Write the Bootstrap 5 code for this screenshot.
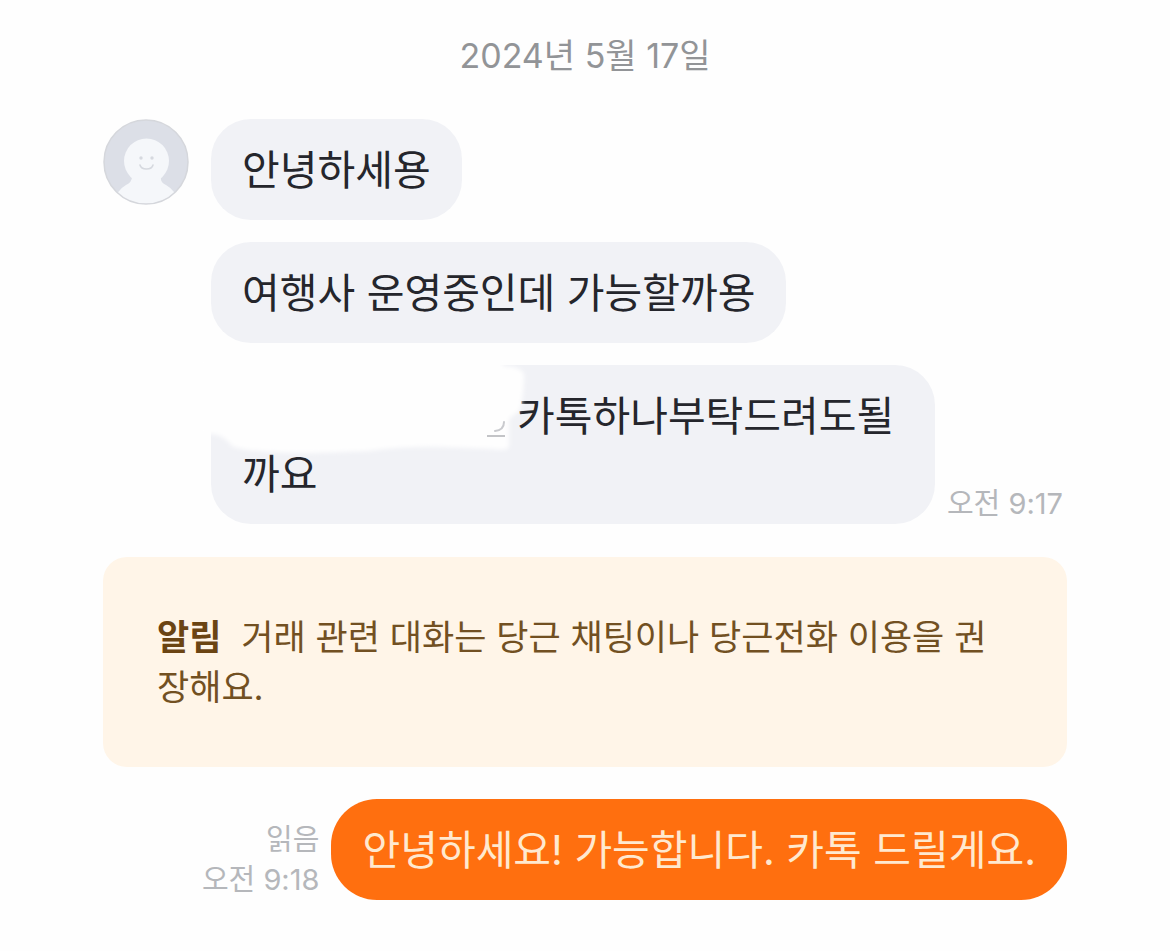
<!DOCTYPE html>
<html lang="ko">
<head>
<meta charset="utf-8">
<meta name="viewport" content="width=device-width, initial-scale=1">
<title>채팅</title>
<link href="https://cdn.jsdelivr.net/npm/bootstrap@5.3.0/dist/css/bootstrap.min.css" rel="stylesheet">
<style>
  body { font-family: Inter, "Noto Sans CJK KR", sans-serif; background: #fefefe; color: #25262c; word-break: break-all; }
  .chat { padding: 32px 103px 50px; }
  .chat-date { font-size: 34px; line-height: 48px; color: #929497; margin-bottom: 39px; }
  .avatar { width: 86px; height: 86px; }
  .thread { gap: 22px; }
  .bubble { position: relative; padding: 22px 31px 21px; border-radius: 40px; font-size: 41px; line-height: 58px; background: #f1f2f6; }
  .bubble-sent { background: #ff6f0f; color: #ffe9cf; border-radius: 46px; }
  .stamp { font-size: 29px; line-height: 40px; color: #b5b7bb; white-space: nowrap; }
  .stamp-gap { gap: 12px; }
  .notice { background: #fff5e8; color: #725022; border-radius: 24px; padding: 55px 54px; font-size: 35px; line-height: 50px; margin: 33px 0 32px; }
  .notice strong { color: #6b4413; margin-right: 10px; }
  .hidden-name { display: inline-block; width: 275px; height: 1px; }
  .smudge { position: absolute; left: -8px; top: -6px; width: 330px; height: 100px; }
</style>
</head>
<body>
<main class="chat">
  <div class="chat-date text-center"><time datetime="2024-05-17">2024년 5월 17일</time></div>

  <section class="d-flex align-items-start thread">
    <svg class="avatar flex-shrink-0" viewBox="0 0 86 86" role="img" aria-label="프로필">
      <defs><clipPath id="face"><circle cx="43" cy="43" r="42"/></clipPath></defs>
      <circle cx="43" cy="43" r="42" fill="#dcdfe7"/>
      <g clip-path="url(#face)" fill="#f5f7fa">
        <circle cx="43.500" cy="42" r="22.500"/>
        <path d="M29 58 Q29 63 23 66 Q14 71 10 84 L10 90 H77 L77 84 Q72 71 63 66 Q57 63 58 58Z"/>
      </g>
      <circle cx="43" cy="43" r="42" fill="none" stroke="#d5d7dc" stroke-width="1.500"/>
      <circle cx="38" cy="39" r="1.700" fill="#d6d9df"/>
      <circle cx="49" cy="39" r="1.700" fill="#d6d9df"/>
      <path d="M37 46 Q38 50 43.500 50 Q49 50 50 46" fill="none" stroke="#d6d9df" stroke-width="1.600" stroke-linecap="round"/>
    </svg>
    <div class="d-flex flex-column align-items-start flex-grow-1 thread">
      <div class="bubble">안녕하세용</div>
      <div class="bubble">여행사 운영중인데 가능할까용</div>
      <div class="d-flex align-items-end stamp-gap">
        <div class="bubble">
          <svg class="smudge" viewBox="0 0 330 100" aria-hidden="true">
            <defs><filter id="soft" x="-5%" y="-10%" width="110%" height="120%"><feGaussianBlur stdDeviation="2"/></filter></defs>
            <path filter="url(#soft)" fill="#fefefe" d="M0 0 H300 V7 Q317 7 321 15 Q321 35 317 51 L306 60 V88 Q303 92 290 90 L240 88 Q205 87 165 92 L110 94 Q45 94 29 87 Q20 75 8 75 H0Z"/>
            <path fill="none" stroke="#c9cace" stroke-width="2" stroke-linecap="round" d="M292 72 Q301 71 301 63"/>
            <path fill="none" stroke="#c3c4c7" stroke-width="2" d="M284 77 H302"/>
          </svg>
          <span class="hidden-name"></span>카톡하나부탁드려도될까요
        </div>
        <time class="stamp me-1" datetime="2024-05-17T09:17">오전 9:17</time>
      </div>
    </div>
  </section>

  <aside class="notice"><strong>알림</strong> 거래 관련 대화는 당근 채팅이나 당근전화 이용을 권장해요.</aside>

  <section class="d-flex justify-content-end align-items-end stamp-gap">
    <div class="stamp text-end">읽음<br><time datetime="2024-05-17T09:18">오전 9:18</time></div>
    <div class="bubble bubble-sent">안녕하세요! 가능합니다. 카톡 드릴게요.</div>
  </section>
</main>
<script src="https://cdn.jsdelivr.net/npm/bootstrap@5.3.0/dist/js/bootstrap.bundle.min.js"></script>
</body>
</html>
